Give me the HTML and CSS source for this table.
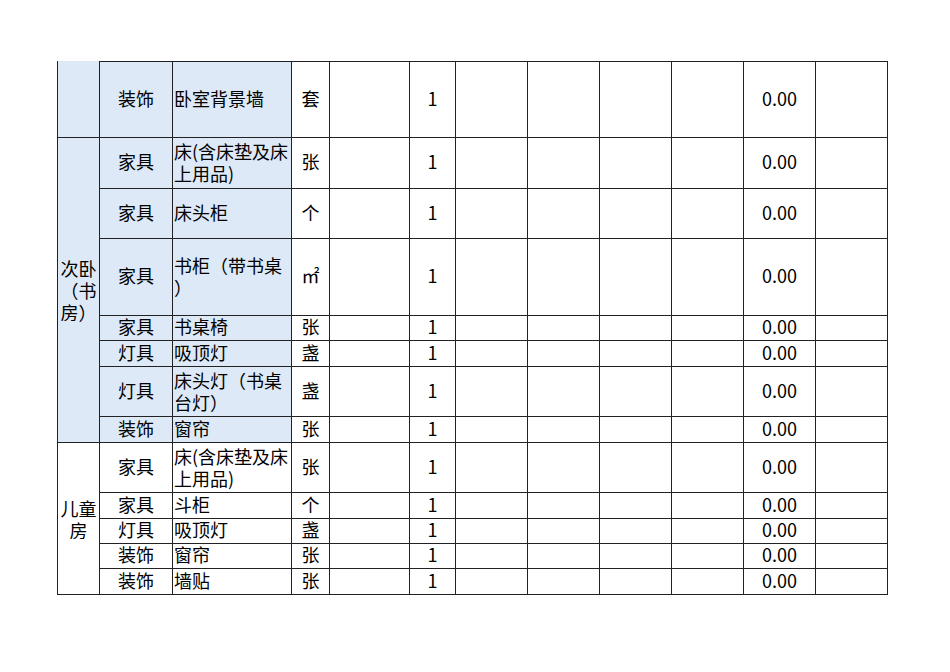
FILE: index.html
```html
<!DOCTYPE html>
<html lang="zh-CN">
<head>
<meta charset="utf-8">
<title>软装清单</title>
<link rel="stylesheet" href="styles.css">
</head>
<body>
<table class="sheet">
  <colgroup>
    <col class="c-room"><col class="c-cat"><col class="c-name"><col class="c-unit"><col class="c-w80"><col class="c-qty">
    <col class="c-w72"><col class="c-w72"><col class="c-w72"><col class="c-w72"><col class="c-w72"><col class="c-w72">
  </colgroup>
  <tbody>
    <tr class="h77">
      <td class="room blue first"></td>
      <td class="cat blue">装饰</td>
      <td class="name blue">卧室背景墙</td>
      <td class="unit">套</td>
      <td></td><td class="qty">1</td><td></td><td></td><td></td><td></td><td class="amt">0.00</td><td></td>
    </tr>
    <tr class="h51">
      <td class="room blue ml" rowspan="7">次卧<br>（书<br>房）</td>
      <td class="cat blue">家具</td>
      <td class="name blue ml">床(含床垫及床<br>上用品)</td>
      <td class="unit">张</td>
      <td></td><td class="qty">1</td><td></td><td></td><td></td><td></td><td class="amt">0.00</td><td></td>
    </tr>
    <tr class="h50">
      <td class="cat blue">家具</td>
      <td class="name blue">床头柜</td>
      <td class="unit">个</td>
      <td></td><td class="qty">1</td><td></td><td></td><td></td><td></td><td class="amt">0.00</td><td></td>
    </tr>
    <tr class="h77">
      <td class="cat blue">家具</td>
      <td class="name blue ml">书柜（带书桌<br>）</td>
      <td class="unit">㎡</td>
      <td></td><td class="qty">1</td><td></td><td></td><td></td><td></td><td class="amt">0.00</td><td></td>
    </tr>
    <tr class="h25">
      <td class="cat blue">家具</td>
      <td class="name blue">书桌椅</td>
      <td class="unit">张</td>
      <td></td><td class="qty">1</td><td></td><td></td><td></td><td></td><td class="amt">0.00</td><td></td>
    </tr>
    <tr class="h26">
      <td class="cat blue">灯具</td>
      <td class="name blue">吸顶灯</td>
      <td class="unit">盏</td>
      <td></td><td class="qty">1</td><td></td><td></td><td></td><td></td><td class="amt">0.00</td><td></td>
    </tr>
    <tr class="h50">
      <td class="cat blue">灯具</td>
      <td class="name blue ml">床头灯（书桌<br>台灯）</td>
      <td class="unit">盏</td>
      <td></td><td class="qty">1</td><td></td><td></td><td></td><td></td><td class="amt">0.00</td><td></td>
    </tr>
    <tr class="h26">
      <td class="cat blue">装饰</td>
      <td class="name blue">窗帘</td>
      <td class="unit">张</td>
      <td></td><td class="qty">1</td><td></td><td></td><td></td><td></td><td class="amt">0.00</td><td></td>
    </tr>
    <tr class="h50">
      <td class="room ml" rowspan="5">儿童<br>房</td>
      <td class="cat">家具</td>
      <td class="name ml">床(含床垫及床<br>上用品)</td>
      <td class="unit">张</td>
      <td></td><td class="qty">1</td><td></td><td></td><td></td><td></td><td class="amt">0.00</td><td></td>
    </tr>
    <tr class="h26">
      <td class="cat">家具</td>
      <td class="name">斗柜</td>
      <td class="unit">个</td>
      <td></td><td class="qty">1</td><td></td><td></td><td></td><td></td><td class="amt">0.00</td><td></td>
    </tr>
    <tr class="h25">
      <td class="cat">灯具</td>
      <td class="name">吸顶灯</td>
      <td class="unit">盏</td>
      <td></td><td class="qty">1</td><td></td><td></td><td></td><td></td><td class="amt">0.00</td><td></td>
    </tr>
    <tr class="h25">
      <td class="cat">装饰</td>
      <td class="name">窗帘</td>
      <td class="unit">张</td>
      <td></td><td class="qty">1</td><td></td><td></td><td></td><td></td><td class="amt">0.00</td><td></td>
    </tr>
    <tr class="h26">
      <td class="cat">装饰</td>
      <td class="name">墙贴</td>
      <td class="unit">张</td>
      <td></td><td class="qty">1</td><td></td><td></td><td></td><td></td><td class="amt">0.00</td><td></td>
    </tr>
  </tbody>
</table>
</body>
</html>
```

FILE: styles.css
```css
html, body {
  margin: 0;
  padding: 0;
  background: #ffffff;
}

body {
  font-family: "Noto Sans CJK SC", "Noto Sans", sans-serif;
  font-size: 18px;
  color: #000000;
}

.sheet {
  margin: 61px 0 0 57px;
  border-collapse: separate;
  border-spacing: 0;
  table-layout: fixed;
  width: 831px;
  border-left: 1px solid #222222;
}

.sheet td {
  box-sizing: border-box;
  padding: 0 0 4px 0;
  border-right: 1px solid #222222;
  border-bottom: 1px solid #222222;
  border-top: 0;
  vertical-align: middle;
  line-height: 18px;
  white-space: nowrap;
}

.sheet td.ml {
  line-height: 22px;
  padding-bottom: 2px;
}

.sheet td.room {
  padding-bottom: 0;
}

.sheet tr:first-child td {
  border-top: 1px solid #222222;
}

.sheet tr:first-child td.first {
  border-top: 0;
}

.c-room { width: 42px; }
.c-cat { width: 73px; }
.c-name { width: 119px; }
.c-unit { width: 38px; }
.c-w80 { width: 80px; }
.c-qty { width: 46px; }
.c-w72 { width: 72px; }

.h77 { height: 77px; }
.h51 { height: 51px; }
.h50 { height: 50px; }
.h26 { height: 26px; }
.h25 { height: 25px; }

.blue {
  background: #dde9f6;
}

.room {
  text-align: center;
}

.cat {
  text-align: center;
}

.sheet td.name {
  text-align: left;
  padding-left: 1px;
}

.unit {
  text-align: center;
}

.qty {
  text-align: center;
}

.amt {
  text-align: center;
}
```
